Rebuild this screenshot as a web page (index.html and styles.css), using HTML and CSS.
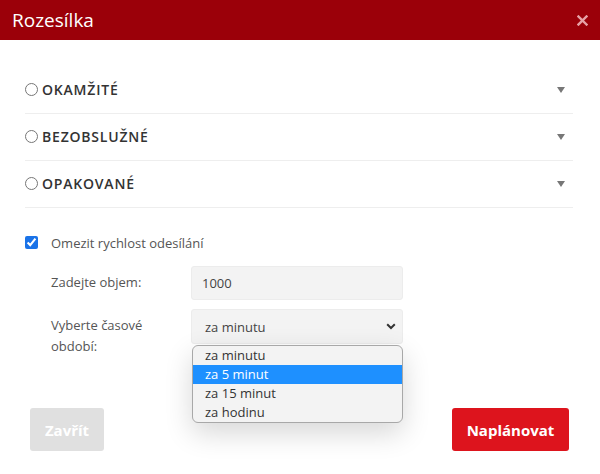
FILE: index.html
```html
<!DOCTYPE html>
<html lang="cs">
<head>
<meta charset="utf-8">
<title>Rozesílka</title>
<link rel="stylesheet" href="styles.css">
</head>
<body>
<div class="modal">
  <header class="modal-header">
    <h1 class="modal-title">Rozesílka</h1>
    <svg class="close" width="11" height="11" viewBox="0 0 11 11"><path d="M1.5 1.5 L9.5 9.5 M9.5 1.5 L1.5 9.5" stroke="#e7a2a7" stroke-width="2.4" stroke-linecap="square"/></svg>
  </header>
  <div class="modal-body">
    <div class="section">
      <label class="section-label"><input type="radio" name="mode" class="radio"> OKAMŽITÉ</label>
      <span class="caret"></span>
    </div>
    <div class="section">
      <label class="section-label"><input type="radio" name="mode" class="radio"> BEZOBSLUŽNÉ</label>
      <span class="caret"></span>
    </div>
    <div class="section">
      <label class="section-label"><input type="radio" name="mode" class="radio"> OPAKOVANÉ</label>
      <span class="caret"></span>
    </div>

    <div class="limit">
      <label class="check-row"><input type="checkbox" class="check" checked> <span>Omezit rychlost odesílání</span></label>
      <div class="form-row">
        <span class="form-label">Zadejte objem:</span>
        <div class="field input">1000</div>
      </div>
      <div class="form-row">
        <span class="form-label">Vyberte časové<br>období:</span>
        <div class="field-wrap">
          <div class="field select">
            <span>za minutu</span>
            <svg class="chev" width="10" height="7" viewBox="0 0 10 7"><path d="M1.2 1.3 L5 5 L8.8 1.3" fill="none" stroke="#333" stroke-width="2"/></svg>
          </div>
          <ul class="dropdown">
            <li>za minutu</li>
            <li class="active">za 5 minut</li>
            <li>za 15 minut</li>
            <li>za hodinu</li>
          </ul>
        </div>
      </div>
    </div>
  </div>
  <footer class="modal-footer">
    <button class="btn btn-close">Zavřít</button>
    <button class="btn btn-primary">Naplánovat</button>
  </footer>
</div>
</body>
</html>
```

FILE: styles.css
```css
* { box-sizing: border-box; }
html, body { margin: 0; padding: 0; background: #fff; }
body { font-family: "Open Sans", "Liberation Sans", sans-serif; color: #333; }

.modal { width: 600px; height: 474px; display: flex; flex-direction: column; background: #fff; }

.modal-header {
  height: 40px; background: #9b0009; color: #fff;
  display: flex; align-items: center; justify-content: space-between;
  padding: 0 12px 0 12px;
}
.modal-title { margin: 0; font-size: 19px; font-weight: 400; line-height: 40px; }
.close { display: block; }

.modal-body { padding: 27px 27px 0 25px; flex: 1; }

.section {
  height: 47px; border-bottom: 1px solid #eee;
  display: flex; align-items: center; justify-content: space-between;
  padding-bottom: 1px;
}
.section-label { display: flex; align-items: center; font-size: 14px; font-weight: 600; letter-spacing: 0.8px; color: #333; }
.radio { margin: 0 4px 0 0; width: 13px; height: 13px; }
.caret { width: 0; height: 0; border-left: 4px solid transparent; border-right: 4px solid transparent; border-top: 6px solid #777; margin-right: 8px; }

.limit { padding-top: 26px; }
.check-row { display: flex; align-items: center; font-size: 13px; color: #555; height: 17px; }
.check { margin: 0 13px 0 0; width: 13px; height: 13px; accent-color: #1a73e8; }

.form-row { display: flex; margin-top: 9px; padding-left: 26px; font-size: 13px; color: #555; }
.form-row:first-of-type { margin-top: 15px; }
.form-label { width: 140px; line-height: 21px; padding-top: 6px; }
.field-wrap { position: relative; }
.field {
  width: 212px; background: #f3f3f3; border: 1px solid #ececec; border-radius: 3px;
  padding: 0 10px; display: flex; align-items: center; color: #444;
}
.input { height: 34px; }
.select { height: 35px; justify-content: space-between; padding: 0 6px 0 13px; }

.dropdown {
  position: absolute; top: 36px; left: 1px; width: 211px; margin: 0; padding: 0; list-style: none;
  background: #f3f3f3; border: 1px solid #a8a8a8; border-radius: 6px; overflow: hidden;
  box-shadow: 0 10px 28px rgba(0,0,0,0.16);
  font-size: 13px; color: #333;
}
.dropdown li { height: 19px; line-height: 19px; padding-left: 12px; }
.dropdown li.active { background: #1e90ff; color: #fff; }

.modal-footer { display: flex; justify-content: space-between; padding: 0 31px 23px 30px; }
.btn { height: 43px; border: 0; border-radius: 3px; font-family: inherit; font-size: 15px; font-weight: 700; color: #fff; padding: 0 12px; }
.btn-close { background: #e0e0e0; width: 74px; }
.btn-primary { background: #dd141d; width: 117px; }
```
